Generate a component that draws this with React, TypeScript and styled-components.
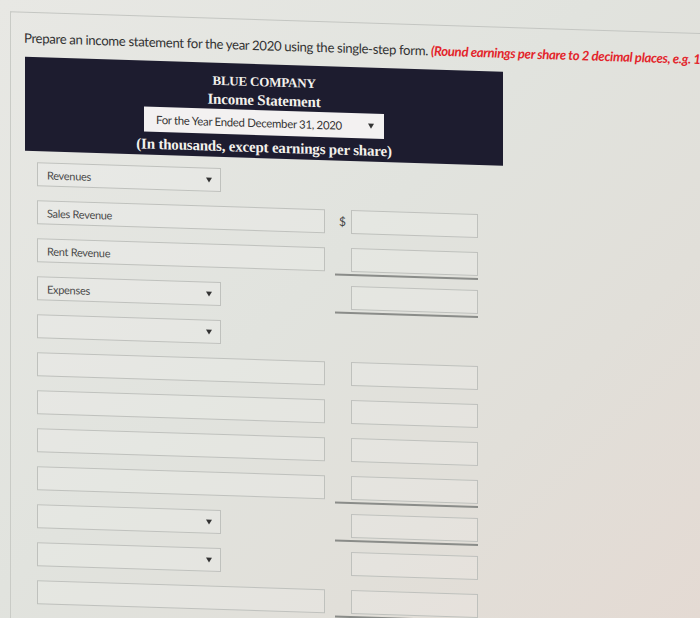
import styled, { createGlobalStyle } from "styled-components";

interface IRowSpec {
  kind: "select" | "text";
  label?: string;
  amount?: boolean;
  dollar?: boolean;
  rule?: boolean;
}

const rows: IRowSpec[] = [
  { kind: "select", label: "Revenues" },
  { kind: "text", label: "Sales Revenue", amount: true, dollar: true },
  { kind: "text", label: "Rent Revenue", amount: true, rule: true },
  { kind: "select", label: "Expenses", amount: true, rule: true },
  { kind: "select" },
  { kind: "text", amount: true },
  { kind: "text", amount: true },
  { kind: "text", amount: true },
  { kind: "text", amount: true, rule: true },
  { kind: "select", amount: true, rule: true },
  { kind: "select", amount: true },
  { kind: "text", amount: true, rule: true },
  { kind: "text", amount: true },
];

const GlobalStyle = createGlobalStyle`
  html, body {
    margin: 0;
    padding: 0;
  }
  body {
    width: 700px;
    height: 618px;
    overflow: hidden;
    background: linear-gradient(135deg, #e8e8e4 0%, #e1e3de 45%, #e1dfd9 72%, #e4dad3 100%);
    font-family: Lato, "Liberation Sans", sans-serif;
  }
`;

const Scene = styled.div`
  display: flex;
  flex-direction: column;
  height: 618px;
  overflow: hidden;
  transform: skewY(1.8deg);
  transform-origin: 0 0;
`;

const TopRule = styled.div`
  margin-top: -7px;
  border-top: 1px solid #cdceca;
`;

const Panel = styled.div`
  flex: 1;
  margin-top: 17px;
  margin-left: 10px;
  padding: 17px 0 0 13px;
  border-top: 1px solid #c4c6c2;
  border-left: 1px solid #c9cbc6;
`;

const Prompt = styled.div`
  font-size: 13.2px;
  line-height: 16px;
  letter-spacing: -0.35px;
  color: #333;
  white-space: nowrap;
`;

const Hint = styled.span`
  color: #e3252b;
  font-weight: 700;
  font-style: italic;
`;

const Header = styled.div`
  margin: 11px 0 0 1px;
  width: 478px;
  padding: 9px 0 2px;
  display: flex;
  flex-direction: column;
  align-items: center;
  background: #1d1c2f;
  color: #f3f1ec;
  font-family: "Liberation Serif", serif;
  font-weight: 700;
`;

const HeadLine = styled.div<{ $size?: number }>`
  font-size: ${(p) => p.$size ?? 15}px;
  line-height: 18px;
  letter-spacing: -0.2px;
`;

const PeriodSelect = styled.div`
  margin: 1px 0 3px;
  width: 240px;
  height: 25px;
  box-sizing: border-box;
  padding: 0 10px 0 12px;
  display: flex;
  align-items: center;
  justify-content: space-between;
  background: #f3f1f1;
  color: #333;
  font-family: Lato, "Liberation Sans", sans-serif;
  font-weight: 400;
  font-size: 11.4px;
  letter-spacing: -0.3px;
`;

const Arrow = styled.span`
  width: 0;
  height: 0;
  border-left: 3px solid transparent;
  border-right: 3px solid transparent;
  border-top: 5px solid #333;
`;

const Sheet = styled.div`
  margin: 11px 0 0 13px;
  display: flex;
  flex-direction: column;
  gap: 14px;
`;

const Row = styled.div`
  display: flex;
  align-items: flex-start;
  height: 24px;
`;

const LeftCell = styled.div`
  width: 298px;
`;

const Field = styled.div<{ $wide: boolean }>`
  width: ${(p) => (p.$wide ? 288 : 184)}px;
  height: 24px;
  box-sizing: border-box;
  padding: 0 8px 0 9px;
  display: flex;
  align-items: center;
  justify-content: space-between;
  border: 1px solid #bfc1bd;
  background: rgba(255, 255, 255, 0.14);
  color: #4a4a4a;
  font-size: 11px;
  letter-spacing: -0.3px;
`;

const RightCell = styled.div<{ $rule: boolean }>`
  width: 143px;
  height: 26px;
  display: flex;
  align-items: flex-start;
  border-bottom: 2px solid ${(p) => (p.$rule ? "#8a8c89" : "transparent")};
`;

const Currency = styled.span`
  width: 16px;
  box-sizing: border-box;
  padding-right: 5px;
  text-align: right;
  line-height: 24px;
  font-size: 12px;
  color: #444;
`;

const Amount = styled.div`
  width: 127px;
  height: 24px;
  box-sizing: border-box;
  border: 1px solid #bfc1bd;
  background: rgba(255, 255, 255, 0.14);
`;

function App() {
  return (
    <>
      <GlobalStyle />
      <Scene>
        <TopRule />
        <Panel>
          <Prompt>
            Prepare an income statement for the year 2020 using the single-step form.{" "}
            <Hint>(Round earnings per share to 2 decimal places, e.g. 1.45.)</Hint>
          </Prompt>
          <Header>
            <HeadLine $size={13}>BLUE COMPANY</HeadLine>
            <HeadLine>Income Statement</HeadLine>
            <PeriodSelect>
              <span>For the Year Ended December 31, 2020</span>
              <Arrow />
            </PeriodSelect>
            <HeadLine>(In thousands, except earnings per share)</HeadLine>
          </Header>
          <Sheet>
            {rows.map((row, i) => (
              <Row key={i}>
                <LeftCell>
                  <Field $wide={row.kind === "text"}>
                    <span>{row.label ?? ""}</span>
                    {row.kind === "select" && <Arrow />}
                  </Field>
                </LeftCell>
                {row.amount && (
                  <RightCell $rule={!!row.rule}>
                    <Currency>{row.dollar ? "$" : ""}</Currency>
                    <Amount />
                  </RightCell>
                )}
              </Row>
            ))}
          </Sheet>
        </Panel>
      </Scene>
    </>
  );
}

export default App;
